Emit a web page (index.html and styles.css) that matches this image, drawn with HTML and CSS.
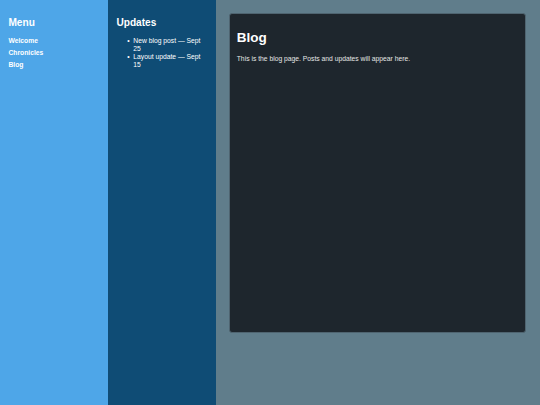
FILE: index.html
```html
<!DOCTYPE html>
<html lang="en">
<head>
<meta charset="utf-8">
<title>Blog</title>
<link rel="stylesheet" href="styles.css">
</head>
<body>
<div class="layout">
  <nav class="menu">
    <h2 class="title">Menu</h2>
    <a class="nav-link" href="#">Welcome</a>
    <a class="nav-link" href="#">Chronicles</a>
    <a class="nav-link" href="#">Blog</a>
  </nav>
  <aside class="updates">
    <h2 class="title">Updates</h2>
    <ul class="update-list">
      <li>New blog post — Sept 25</li>
      <li>Layout update — Sept 15</li>
    </ul>
  </aside>
  <main class="main">
    <section class="card">
      <h1 class="card-title">Blog</h1>
      <p class="card-text">This is the blog page. Posts and updates will appear here.</p>
    </section>
  </main>
</div>
</body>
</html>
```

FILE: styles.css
```css
html, body {
  margin: 0;
  padding: 0;
}
body {
  font-family: "Liberation Sans", Arial, sans-serif;
  font-size: 6.75px;
  line-height: 7.8px;
  color: #ffffff;
  background: #607d8b;
}
.layout {
  display: flex;
  height: 405px;
}
.menu {
  width: 108px;
  flex: 0 0 108px;
  box-sizing: border-box;
  padding: 8.44px;
  background: #4ea6e8;
}
.updates {
  width: 108px;
  flex: 0 0 108px;
  box-sizing: border-box;
  padding: 8.44px;
  background: #0f4c75;
}
.title {
  font-size: 10.125px;
  line-height: 11.6px;
  font-weight: bold;
  margin: 8.4px 0;
  color: #ffffff;
}
.menu .title {
  margin-bottom: 8.6px;
}
.nav-link {
  display: block;
  color: #ffffff;
  font-weight: bold;
  text-decoration: none;
  margin-bottom: 4.2px;
}
.update-list {
  margin: 9px 0 6.75px;
  padding-left: 16.875px;
  line-height: 7.9px;
}
.update-list li::marker {
  content: "•  ";
}
.main {
  flex: 1;
  padding: 13px 14px 13px 13px;
  background: #607d8b;
}
.card {
  height: 320px;
  box-sizing: border-box;
  padding: 6.75px;
  background: #1e262d;
  border: 1px solid #4f6470;
  border-radius: 3px;
}
.card-title {
  font-size: 13.5px;
  line-height: 15.5px;
  font-weight: bold;
  margin: 9px 0 9.5px;
  color: #ffffff;
}
.card-text {
  margin: 6.75px 0;
  color: #e6e6e6;
}
```
